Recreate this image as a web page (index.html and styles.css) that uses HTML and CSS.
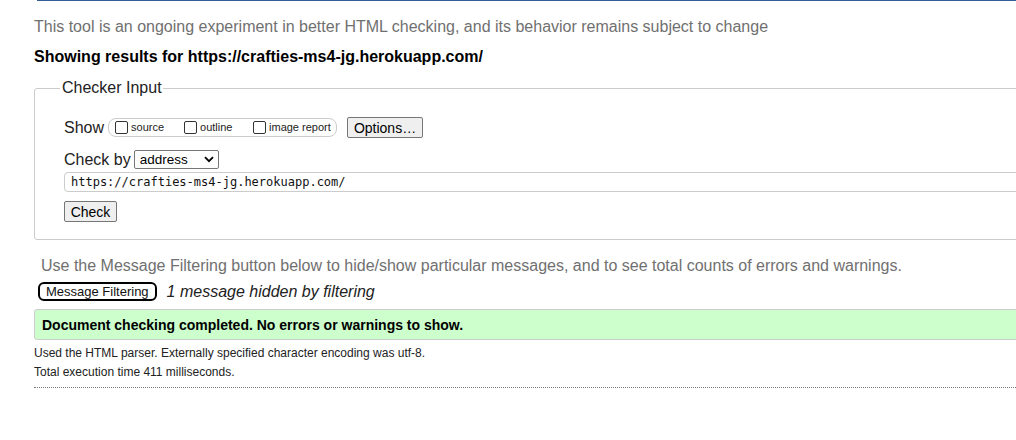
FILE: index.html
```html
<!DOCTYPE html>
<html lang="en">
<head>
<meta charset="utf-8">
<title>Nu Html Checker</title>
<link rel="stylesheet" href="styles.css">
</head>
<body>
<div class="topbar"></div>
<main class="wrap">
  <p class="intro">This tool is an ongoing experiment in better HTML checking, and its behavior remains subject to change</p>
  <p class="showing">Showing results for https://crafties-ms4-jg.herokuapp.com/</p>
  <fieldset class="checker">
    <legend class="legend">Checker Input</legend>
    <div class="row show-row">
      <span class="label">Show</span>
      <span class="pill">
        <label class="opt opt-fixed"><span class="box"></span>source</label>
        <label class="opt opt-fixed"><span class="box"></span>outline</label>
        <label class="opt"><span class="box"></span>image report</label>
      </span>
      <span class="btn btn-options">Options…</span>
    </div>
    <div class="row by-row">
      <span class="label">Check by</span>
      <span class="select">address<svg class="chev" width="10" height="7" viewBox="0 0 10 7"><path d="M1 1.2 L5 5.2 L9 1.2" fill="none" stroke="#000" stroke-width="1.8"/></svg></span>
    </div>
    <div class="url">https://crafties-ms4-jg.herokuapp.com/</div>
    <div class="row"><span class="btn btn-check">Check</span></div>
  </fieldset>
  <p class="filter-note">Use the Message Filtering button below to hide/show particular messages, and to see total counts of errors and warnings.</p>
  <div class="filter-row">
    <span class="filter-btn">Message Filtering</span>
    <em class="hidden-note">1 message hidden by filtering</em>
  </div>
  <div class="success">Document checking completed. No errors or warnings to show.</div>
  <p class="meta">Used the HTML parser. Externally specified character encoding was utf-8.</p>
  <p class="meta meta2">Total execution time 411 milliseconds.</p>
  <div class="dotted"></div>
</main>
</body>
</html>
```
FILE: styles.css
```css
html, body {
  margin: 0;
  padding: 0;
  overflow: hidden;
  background: #fff;
}
body {
  font-family: "Liberation Sans", Arial, sans-serif;
  color: #000;
  width: 1016px;
  height: 440px;
}
.topbar {
  margin-left: 37px;
  height: 1px;
  background: #365d95;
  width: 1000px;
}
.wrap {
  padding-left: 34px;
  width: 1040px;
  display: flex;
  flex-direction: column;
  align-items: flex-start;
}
.intro {
  margin: 17px 0 0 0;
  font-size: 16px;
  line-height: 18px;
  color: #707070;
}
.showing {
  margin: 12px 0 0 0;
  font-size: 16px;
  line-height: 18px;
  font-weight: bold;
}
.checker {
  margin: 13px 0 0 0;
  align-self: stretch;
  border: 1px solid #ccc;
  border-radius: 3px;
  padding: 20px 0 17px 29px;
  min-width: 0;
}
.legend {
  margin-left: -4px;
  padding: 0 1px 0 2px;
  font-size: 16px;
  line-height: 18px;
  color: #222;
}
.row {
  display: flex;
  align-items: center;
}
.label {
  font-size: 16px;
  line-height: 18px;
  color: #222;
}
.show-row {
  height: 21px;
}
.pill {
  margin-left: 4px;
  display: flex;
  align-items: center;
  height: 19px;
  box-sizing: border-box;
  border: 1px solid #ccc;
  border-radius: 8px;
  padding: 0 0 0 6px;
  width: 229px;
}
.opt {
  display: flex;
  align-items: center;
  font-size: 11px;
  line-height: 13px;
  color: #222;
  white-space: nowrap;
}
.opt-fixed {
  width: 69px;
  flex: none;
}
.box {
  width: 11px;
  height: 11px;
  border: 1px solid #333;
  border-radius: 2px;
  margin-right: 3px;
  box-sizing: content-box;
  flex: none;
}
.btn {
  display: inline-flex;
  align-items: center;
  justify-content: center;
  background: #efefef;
  border: 1px solid #767676;
  border-radius: 2px;
  font-size: 14px;
  color: #000;
  box-sizing: border-box;
}
.btn-options {
  margin-left: 10px;
  width: 76px;
  height: 21px;
}
.by-row {
  margin-top: 12px;
  height: 19px;
}
.select {
  margin-left: 3px;
  width: 85px;
  height: 19px;
  box-sizing: border-box;
  border: 1px solid #767676;
  border-radius: 2px;
  display: flex;
  align-items: center;
  justify-content: space-between;
  padding: 0 4px 0 5px;
  font-size: 13.5px;
}
.url {
  margin-top: 3px;
  height: 20px;
  box-sizing: border-box;
  border: 1px solid #ccc;
  border-radius: 4px;
  padding: 0 6px;
  display: flex;
  align-items: center;
  font-family: "DejaVu Sans Mono", monospace;
  font-size: 12px;
  color: #111;
}
.btn-check {
  margin-top: 9px;
  width: 53px;
  height: 21px;
}
.filter-note {
  margin: 17px 0 0 7px;
  font-size: 16px;
  line-height: 18px;
  color: #707070;
}
.filter-row {
  margin-top: 7px;
  margin-left: 4px;
  display: flex;
  align-items: center;
}
.filter-btn {
  height: 19px;
  box-sizing: border-box;
  border: 2px solid #000;
  border-radius: 6px;
  padding: 0 6px;
  display: flex;
  align-items: center;
  font-size: 13px;
  color: #111;
}
.hidden-note {
  margin-left: 10px;
  font-size: 16px;
  line-height: 18px;
  color: #222;
}
.success {
  margin-top: 8px;
  align-self: stretch;
  height: 31px;
  box-sizing: border-box;
  background: #ccffcc;
  border: 1px solid #ccc;
  border-radius: 3px;
  padding-left: 7px;
  display: flex;
  align-items: center;
  font-size: 14px;
  font-weight: bold;
}
.meta {
  margin: 6px 0 0 0;
  font-size: 12px;
  line-height: 14px;
  color: #222;
}
.meta2 {
  margin-top: 5px;
}
.dotted {
  margin-top: 8px;
  align-self: stretch;
  border-top: 1px dotted #777;
}
```
